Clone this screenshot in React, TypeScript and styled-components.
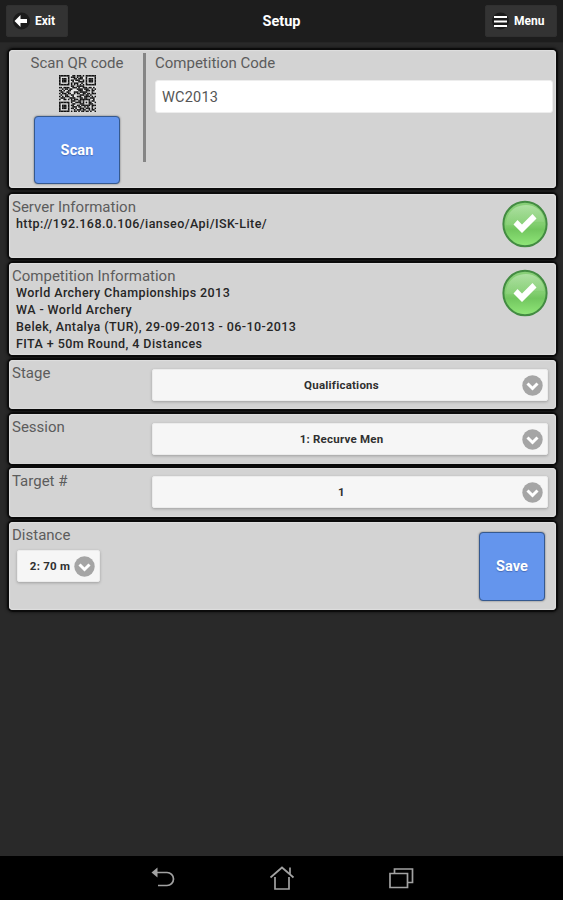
import React from "react";
import styled, { createGlobalStyle } from "styled-components";

const GlobalStyle = createGlobalStyle`
  * { box-sizing: border-box; }
  body { margin: 0; background: #292929; }
`;

const Screen = styled.div`
  display: flex;
  flex-direction: column;
  width: 563px;
  height: 900px;
  overflow: hidden;
  background: #292929;
  font-family: Roboto, "Liberation Sans", sans-serif;
  color: #303030;
`;

const Header = styled.header`
  display: grid;
  grid-template-columns: 1fr auto 1fr;
  align-items: center;
  flex: none;
  height: 43px;
  padding: 0 6px;
  background: #1d1d1d;
  border-bottom: 1px solid #252525;
`;

const Title = styled.h1`
  margin: 0;
  padding-top: 2px;
  color: #fff;
  font-size: 14.5px;
  line-height: 20px;
  font-weight: 700;
`;

const HeaderButton = styled.button<{ $end?: boolean; $width: number }>`
  display: flex;
  align-items: center;
  justify-self: ${(p) => (p.$end ? "end" : "start")};
  gap: 5px;
  width: ${(p) => p.$width}px;
  height: 32px;
  padding: 0 0 0 6px;
  border: 1px solid #303030;
  border-radius: 2px;
  background: #333;
  color: #fff;
  font: 700 12px Roboto, sans-serif;
`;

const Panels = styled.main`
  display: flex;
  flex-direction: column;
  flex: 1;
  padding: 7px 7px 0 9px;
`;

const Panel = styled.section<{ $height: number; $gap?: number }>`
  display: flex;
  flex: none;
  height: ${(p) => p.$height}px;
  margin-bottom: ${(p) => p.$gap ?? 0}px;
  border-radius: 4px;
  background: #d3d3d3;
  box-shadow: inset 0 0 1px 1px #dedede, 0 0 1px 2px #0b0b0b, 0 0 3px 3px rgba(0, 0, 0, 0.3);
`;

const ScanColumn = styled.div`
  display: flex;
  flex-direction: column;
  align-items: center;
  width: 137px;
  height: 109px;
  margin-top: 3px;
  padding: 1px 0 0 2px;
  border-right: 3px solid #858585;
`;

const CodeColumn = styled.div`
  flex: 1;
  padding: 4px 3px 0 9px;
`;

const Label = styled.h2`
  margin: 0;
  color: #5c5c5c;
  font-size: 15px;
  line-height: 19px;
  font-weight: 400;
  letter-spacing: 0;
  white-space: nowrap;
`;

const CodeInput = styled.input`
  display: block;
  width: 398px;
  height: 33px;
  margin-top: 7px;
  padding: 1px 6px 0;
  border: 1px solid #ededed;
  border-radius: 3px;
  background: #fff;
  color: #555;
  font: 400 14.5px Roboto, sans-serif;
  letter-spacing: 0.2px;
`;

const ActionButton = styled.button<{ $w: number; $h: number }>`
  flex: none;
  width: ${(p) => p.$w}px;
  height: ${(p) => p.$h}px;
  padding: 0;
  border: 1px solid #35598f;
  border-radius: 4px;
  background: #6495ed;
  box-shadow: 0 0 2px rgba(0, 0, 0, 0.5);
  color: #fff;
  font: 700 14.5px Roboto, sans-serif;
  letter-spacing: 0.1px;
  text-shadow: 0 1px 1px rgba(50, 80, 150, 0.6);
`;

const ScanButton = styled(ActionButton)`
  margin-top: 4px;
`;

const SaveButton = styled(ActionButton)`
  margin: 10px 11px 0 auto;
`;

const InfoText = styled.div`
  flex: 1;
  padding: 4px 0 0 3px;
`;

const InfoLines = styled.div`
  margin: -2px 0 0 4px;
`;

const InfoLine = styled.p`
  margin: 0;
  color: #262626;
  font-size: 12.5px;
  line-height: 17px;
  font-weight: 500;
  letter-spacing: 0.42px;
`;

const CheckIcon = styled.svg`
  flex: none;
  width: 46px;
  height: 48px;
  margin: 6px 8px 0 0;
`;

const FieldLabel = styled.div`
  width: 143px;
  padding: 4px 0 0 3px;
`;

const Select = styled.button<{ $top: number }>`
  display: flex;
  align-items: center;
  width: 396px;
  height: 32px;
  margin: ${(p) => p.$top}px 0 0;
  padding: 0 4px 0 8px;
  border: 1px solid #ececec;
  border-radius: 2px;
  background: #f6f6f6;
  box-shadow: 0 1px 3px rgba(0, 0, 0, 0.25);
  color: #303030;
  font: 700 11.5px Roboto, sans-serif;
  letter-spacing: 0.22px;
`;

const CompactSelect = styled(Select)`
  width: 83px;
  margin-left: 5px;
`;

const SelectText = styled.span`
  flex: 1;
  margin-top: -1px;
  text-align: center;
  white-space: nowrap;
`;

const SelectIcon = styled.svg`
  flex: none;
  width: 21px;
  height: 21px;
`;

const NavBar = styled.nav`
  display: flex;
  justify-content: center;
  align-items: center;
  gap: 93px;
  flex: none;
  height: 44px;
  background: #000;
`;

const NavIcon = styled.svg`
  width: 26px;
  height: 26px;
  fill: none;
  stroke: #a2a2a2;
  stroke-width: 1.7;
`;

const QR_ROWS = [
  "1111111001101110101111111",
  "1000001011101011001000001",
  "1011101000110111001011101",
  "1011101011011100101011101",
  "1011101001000111101011101",
  "1000001010111001001000001",
  "1111111010101010101111111",
  "0000000011001111100000000",
  "1101111001110100111011010",
  "0010110110001111011100101",
  "1101001100000111001110110",
  "0110011000111011111000100",
  "1011101100101100110110111",
  "0100110011000011101101000",
  "1010111001001110011110101",
  "0111000111100011011001110",
  "1001101010111011111110010",
  "0000000011100110100010110",
  "1111111010011110101011001",
  "1000001001100011100011100",
  "1011101011001101111110111",
  "1011101001110110010100100",
  "1011101011010011101110101",
  "1000001000101110110010110",
  "1111111010110101101101001",
];

const QrDrawing = styled.svg`
  flex: none;
  width: 37px;
  height: 37px;
  margin-top: 2px;
`;

const QrCode = () => (
  <QrDrawing viewBox="0 0 25 25" aria-hidden="true">
    <rect width="25" height="25" fill="#e6e6e6" />
    {QR_ROWS.map((row, y) =>
      [...row].map((bit, x) =>
        bit === "1" ? <rect key={`${x}-${y}`} x={x} y={y} width="1.08" height="1.08" fill="#111" /> : null,
      ),
    )}
  </QrDrawing>
);

const Check = () => (
  <CheckIcon viewBox="0 0 46 48" aria-label="OK">
    <defs>
      <linearGradient id="okFill" x1="0" y1="0" x2="0" y2="1">
        <stop offset="0" stopColor="#88cf78" />
        <stop offset="0.5" stopColor="#82ce70" />
        <stop offset="0.62" stopColor="#72c65f" />
        <stop offset="1" stopColor="#91e779" />
      </linearGradient>
      <linearGradient id="okGloss" x1="0" y1="0" x2="0" y2="1">
        <stop offset="0" stopColor="#b8e5ad" stopOpacity="0.8" />
        <stop offset="1" stopColor="#a5dc98" stopOpacity="0.2" />
      </linearGradient>
    </defs>
    <ellipse cx="23" cy="24" rx="21.6" ry="22.2" fill="url(#okFill)" stroke="#438b42" strokeWidth="2" />
    <path d="M4 25C4-1 42-1 42 22C29 20 18 27 4 25Z" fill="url(#okGloss)" />
    <path d="M11.5 24.5l4-4.5 4.5 4.5L30.5 14l4 4.5L20 33z" fill="#fff" />
  </CheckIcon>
);

const Chevron = () => (
  <SelectIcon viewBox="0 0 21 21" aria-hidden="true">
    <circle cx="10.5" cy="10.5" r="10.2" fill="#a5a5a5" />
    <path d="M5.5 8.5l5 5 5-5" fill="none" stroke="#fff" strokeWidth="3" />
  </SelectIcon>
);

const HeaderIcon = styled.svg`
  flex: none;
  width: 17px;
  height: 18px;
`;

type Field = { label: string; value: string; height: number; gap: number; top: number };

const FIELDS: Field[] = [
  { label: "Stage", value: "Qualifications", height: 49, gap: 5, top: 9 },
  { label: "Session", value: "1: Recurve Men", height: 50, gap: 4, top: 9 },
  { label: "Target #", value: "1", height: 49, gap: 5, top: 8 },
];

export default function App() {
  return (
    <Screen>
      <GlobalStyle />
      <Header>
        <HeaderButton $width={62}>
          <HeaderIcon viewBox="0 0 17 18">
            <circle cx="8.5" cy="9" r="8.5" fill="#1b1b1b" />
            <path d="M1.5 9l6-6v4H14v4H7.5v4z" fill="#fff" />
          </HeaderIcon>
          Exit
        </HeaderButton>
        <Title>Setup</Title>
        <HeaderButton $end $width={72}>
          <HeaderIcon viewBox="0 0 17 18">
            <circle cx="8.5" cy="9" r="8.5" fill="#1b1b1b" />
            <path d="M2 5h13M2 9.5h13M2 14h13" stroke="#fff" strokeWidth="2" />
          </HeaderIcon>
          Menu
        </HeaderButton>
      </Header>

      <Panels>
        <Panel $height={138} $gap={6}>
          <ScanColumn>
            <Label>Scan QR code</Label>
            <QrCode />
            <ScanButton $w={86} $h={68}>Scan</ScanButton>
          </ScanColumn>
          <CodeColumn>
            <Label>Competition Code</Label>
            <CodeInput defaultValue="WC2013" />
          </CodeColumn>
        </Panel>

        <Panel $height={64} $gap={5}>
          <InfoText>
            <Label>Server Information</Label>
            <InfoLines>
              <InfoLine>http://192.168.0.106/ianseo/Api/ISK-Lite/</InfoLine>
            </InfoLines>
          </InfoText>
          <Check />
        </Panel>

        <Panel $height={92} $gap={5}>
          <InfoText>
            <Label>Competition Information</Label>
            <InfoLines>
              <InfoLine>World Archery Championships 2013</InfoLine>
              <InfoLine>WA - World Archery</InfoLine>
              <InfoLine>Belek, Antalya (TUR), 29-09-2013 - 06-10-2013</InfoLine>
              <InfoLine>FITA + 50m Round, 4 Distances</InfoLine>
            </InfoLines>
          </InfoText>
          <Check />
        </Panel>

        {FIELDS.map((f) => (
          <Panel key={f.label} $height={f.height} $gap={f.gap}>
            <FieldLabel>
              <Label>{f.label}</Label>
            </FieldLabel>
            <Select $top={f.top}>
              <SelectText>{f.value}</SelectText>
              <Chevron />
            </Select>
          </Panel>
        ))}

        <Panel $height={88}>
          <InfoText>
            <Label>Distance</Label>
            <CompactSelect $top={5}>
              <SelectText>2: 70 m</SelectText>
              <Chevron />
            </CompactSelect>
          </InfoText>
          <SaveButton $w={66} $h={69}>Save</SaveButton>
        </Panel>
      </Panels>

      <NavBar>
        <NavIcon viewBox="0 0 26 26" aria-label="Back">
          <path d="M5 7.5h12a6.5 6.5 0 0 1 0 13H8" />
          <path d="M1.5 7.5L7.5 2.5v10z" fill="#a2a2a2" stroke="none" />
        </NavIcon>
        <NavIcon viewBox="0 0 26 26" aria-label="Home">
          <path d="M1.5 12.5L13 2.5l11.5 10M21 9V2.5M6 12v12h14V12" />
        </NavIcon>
        <NavIcon viewBox="0 0 26 26" aria-label="Recent apps">
          <path d="M2 8.5h17.5v14H2zM6.5 8V4h18v13.5H20" />
        </NavIcon>
      </NavBar>
    </Screen>
  );
}
